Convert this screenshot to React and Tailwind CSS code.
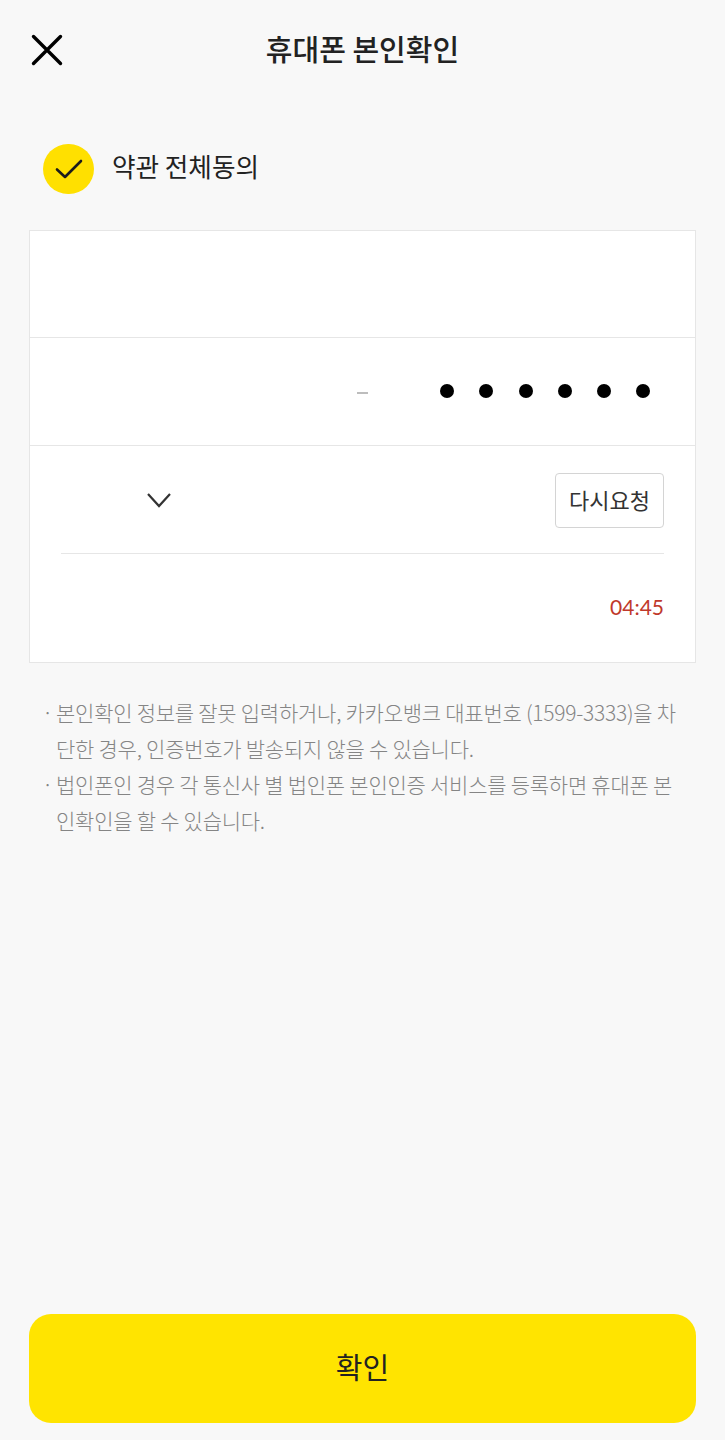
const notes = [
  ['본인확인 정보를 잘못 입력하거나, 카카오뱅크 대표번호 (1599-3333)을 차', '단한 경우, 인증번호가 발송되지 않을 수 있습니다.'],
  ['법인폰인 경우 각 통신사 별 법인폰 본인인증 서비스를 등록하면 휴대폰 본', '인확인을 할 수 있습니다.'],
];

const App = () => {
  return (
    <div className="flex h-[1440px] w-[725px] flex-col bg-[#f8f8f8] font-['Noto_Sans_CJK_KR','Noto_Sans',sans-serif] text-[#222]">
      {/* Header */}
      <header className="relative flex h-[100px] shrink-0 items-center justify-center pb-[4px]">
        <button className="absolute left-[30px] top-[33px]">
          <svg width="34" height="34" viewBox="0 0 34 34" fill="none" stroke="#000" strokeWidth="3.4" strokeLinecap="round">
            <path d="M3.5 3.5L30.5 30.5M30.5 3.5L3.5 30.5" />
          </svg>
        </button>
        <h1 className="text-[29px] leading-none font-medium">휴대폰 본인확인</h1>
      </header>

      {/* Agree all */}
      <div className="mt-[44px] flex h-[50px] items-center gap-[18px] pl-[43px]">
        <span className="flex h-[50px] w-[51px] items-center justify-center rounded-full bg-[#ffe000]">
          <svg width="28" height="20" viewBox="0 0 28 20" fill="none" stroke="#1c1c1c" strokeWidth="2.6" strokeLinecap="round" strokeLinejoin="round">
            <path d="M2 10.5L10 18L26 2" />
          </svg>
        </span>
        <span className="pb-[7px] text-[25.6px] leading-none">약관 전체동의</span>
      </div>

      {/* Form card */}
      <section className="mx-[29px] mt-[36px] h-[433px] shrink-0 border border-[#e6e6e6] bg-white">
        <div className="h-[107px] border-b border-[#e6e6e6]" />
        <div className="flex h-[108px] items-center border-b border-[#e6e6e6]">
          <span className="ml-[327px] h-[2px] w-[11px] translate-y-[1px] bg-[#bdbdbd]" />
          <div className="ml-[72px] flex -translate-y-[1px] gap-[25.3px]">
            {[0, 1, 2, 3, 4, 5].map((i) => (
              <span key={i} className="h-[14px] w-[14px] rounded-full bg-black" />
            ))}
          </div>
        </div>
        <div className="mx-[31px] flex h-[108px] items-center justify-between border-b border-[#e6e6e6] pt-[1px]">
          <svg className="ml-[85px]" width="26" height="16" viewBox="0 0 26 16" fill="none" stroke="#333" strokeWidth="2.2">
            <path d="M2 2L13 14L24 2" />
          </svg>
          <button className="flex h-[55px] w-[109px] items-center justify-center rounded-[4px] border border-[#d4d4d4] bg-white pb-[2px] text-[22px] leading-none text-[#333]">
            다시요청
          </button>
        </div>
        <div className="mx-[31px] flex h-[108px] items-center justify-end">
          <span className="pb-[3px] font-['Lato','Noto_Sans',sans-serif] text-[21px] leading-none text-[#c0392b]">04:45</span>
        </div>
      </section>

      {/* Notes */}
      <div className="mt-[31px] ml-[42px] text-[21px] leading-[36px] font-light tracking-[-0.25px] text-[#858585]">
        {notes.map((lines) => (
          <div key={lines[0]} className="flex">
            <span className="w-[14px] shrink-0">·</span>
            <p className="whitespace-nowrap">
              {lines[0]}
              <br />
              {lines[1]}
            </p>
          </div>
        ))}
      </div>

      {/* Confirm */}
      <button className="mx-[29px] mt-auto mb-[17px] flex h-[109px] shrink-0 items-center justify-center rounded-[22px] bg-[#ffe400] pb-[5px] text-[29px] leading-none text-[#222]">
        확인
      </button>
    </div>
  );
};

export default App;
